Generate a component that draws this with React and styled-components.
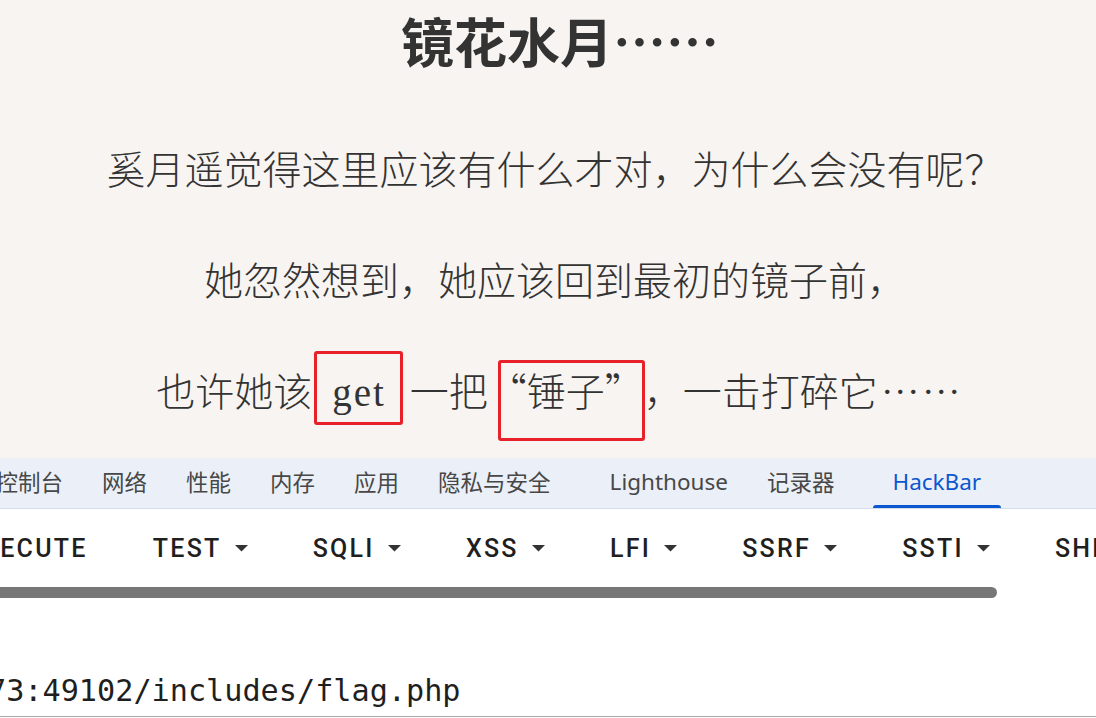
import React from "react";
import styled, { createGlobalStyle, css } from "styled-components";

const GlobalStyle = createGlobalStyle`
  html, body {
    margin: 0;
    padding: 0;
    background: #fff;
  }
  body {
    width: 1096px;
    height: 718px;
    overflow: hidden;
  }
`;

const tabs = [
  { label: "控制台" },
  { label: "网络" },
  { label: "性能" },
  { label: "内存" },
  { label: "应用" },
  { label: "隐私与安全" },
  { label: "Lighthouse", gap: 20 },
  { label: "记录器" },
  { label: "HackBar", gap: 19, active: true },
];

const tools = [
  { label: "Execute" },
  { label: "Test", menu: true },
  { label: "SQLi", menu: true },
  { label: "XSS", menu: true },
  { label: "LFI", menu: true },
  { label: "SSRF", menu: true },
  { label: "SSTI", menu: true },
  { label: "Shell", menu: true },
];

const Caret = () => (
  <svg width="13" height="7" viewBox="0 0 13 7" aria-hidden="true">
    <polygon points="0,0 13,0 6.5,6.5" fill="#333" />
  </svg>
);

const App = () => {
  return (
    <Page>
      <GlobalStyle />
      <Story>
        <Title>镜花水月……</Title>
        <Para>奚月遥觉得这里应该有什么才对，为什么会没有呢？</Para>
        <Para>她忽然想到，她应该回到最初的镜子前，</Para>
        <Para $shift={9}>
          也许她该
          <Marked $top={-10} $bottom={-8} $left={2} $right={7}>
            <Latin>get</Latin>
          </Marked>
          一把
          <Marked $top={-1} $bottom={-24} $left={10} $right={-1}>
            <Quote>“</Quote>锤子<Quote>”</Quote>
          </Marked>
          ，一击打碎它<Dots>……</Dots>
        </Para>
      </Story>

      <Devtools>
        <TabBar>
          <TabTrack>
            {tabs.map((tab) => (
              <Tab key={tab.label} $gap={tab.gap} $active={tab.active}>
                {tab.label}
              </Tab>
            ))}
          </TabTrack>
        </TabBar>

        <Toolbar>
          <ButtonRow>
            {tools.map((tool) => (
              <ToolButton key={tool.label}>
                {tool.label}
                {tool.menu && <Caret />}
              </ToolButton>
            ))}
          </ButtonRow>
        </Toolbar>
        <ScrollTrack>
          <ScrollThumb />
        </ScrollTrack>

        <UrlPane>
          <UrlField>
            <UrlText>73:49102/includes/flag.php</UrlText>
          </UrlField>
        </UrlPane>
      </Devtools>
    </Page>
  );
};

const Page = styled.div`
  display: flex;
  flex-direction: column;
  width: 1096px;
  height: 718px;
  overflow: hidden;
`;

const Story = styled.section`
  flex-shrink: 0;
  box-sizing: border-box;
  height: 458px;
  padding-left: 14px;
  display: flex;
  flex-direction: column;
  align-items: center;
  background: #f8f4f1;
  color: #333;
  font-family: "Noto Sans CJK SC", "Liberation Serif", serif;
  font-weight: 300;
  font-feature-settings: "fwid";
`;

const Title = styled.h1`
  margin: 0 0 59px 10px;
  font-size: 53px;
  line-height: 80px;
  font-weight: 700;
`;

const Para = styled.p`
  margin: 0 0 55px;
  padding-left: ${({ $shift }) => $shift || 0}px;
  font-size: 39px;
  line-height: 56px;
  white-space: nowrap;
  &:last-child {
    margin-bottom: 0;
  }
`;

const Marked = styled.span`
  position: relative;
  &::after {
    content: "";
    position: absolute;
    top: ${({ $top }) => $top}px;
    bottom: ${({ $bottom }) => $bottom}px;
    left: ${({ $left }) => $left}px;
    right: ${({ $right }) => $right}px;
    border: 3px solid #e8202a;
    border-radius: 3px;
    pointer-events: none;
  }
`;

const Quote = styled.span`
  display: inline-block;
  width: 1em;
  text-align: center;
`;

const Dots = styled.span`
  letter-spacing: 2px;
  margin-left: 3px;
`;

const Latin = styled.span`
  font-family: "Liberation Serif", serif;
  font-weight: 400;
  letter-spacing: 2px;
  padding: 0 24px 0 20px;
`;

const Devtools = styled.section`
  flex: 1;
  display: flex;
  flex-direction: column;
  background: #fff;
  overflow: hidden;
`;

const TabBar = styled.nav`
  flex-shrink: 0;
  height: 50px;
  display: flex;
  background: #ebf0f8;
  border-bottom: 1px solid #d3dce8;
  overflow: hidden;
`;

const TabTrack = styled.div`
  display: flex;
  height: 100%;
  margin-left: -24px;
`;

const Tab = styled.div`
  position: relative;
  box-sizing: border-box;
  display: flex;
  align-items: center;
  padding: 0 19.5px 3px;
  margin-left: ${({ $gap }) => $gap || 0}px;
  font-family: "Noto Sans", "Noto Sans CJK SC", sans-serif;
  font-size: 22.5px;
  color: ${({ $active }) => ($active ? "#0b57d0" : "#474747")};
  white-space: nowrap;
  ${({ $active }) =>
    $active &&
    css`
      &::after {
        content: "";
        position: absolute;
        left: 0;
        right: 0;
        bottom: 0;
        height: 3px;
        background: #0b57d0;
        border-radius: 3px 3px 0 0;
      }
    `}
`;

const Toolbar = styled.div`
  flex-shrink: 0;
  height: 78px;
  display: flex;
  align-items: center;
  overflow: hidden;
`;

const ButtonRow = styled.div`
  display: flex;
  margin-left: -66.8px;
`;

const ToolButton = styled.button`
  flex-shrink: 0;
  display: inline-flex;
  align-items: center;
  gap: 13px;
  height: 72px;
  padding: 0 32.6px;
  border: 0;
  background: transparent;
  font-family: Roboto, "Noto Sans", sans-serif;
  font-weight: 500;
  font-size: 25px;
  letter-spacing: 2.25px;
  text-transform: uppercase;
  color: #1f1f1f;
  white-space: nowrap;
`;

const ScrollTrack = styled.div`
  flex-shrink: 0;
  height: 11px;
  overflow: hidden;
`;

const ScrollThumb = styled.div`
  width: 1003px;
  height: 100%;
  margin-left: -6px;
  background: #777;
  border-radius: 6px;
`;

const UrlPane = styled.div`
  flex: 1;
  display: flex;
  flex-direction: column;
  justify-content: flex-end;
  padding-bottom: 1px;
`;

const UrlField = styled.div`
  padding-bottom: 5px;
  border-bottom: 1px solid #a8a8a8;
  overflow: hidden;
`;

const UrlText = styled.div`
  margin-left: -12px;
  font-family: "DejaVu Sans Mono", "Liberation Mono", monospace;
  font-size: 30.2px;
  line-height: 40px;
  color: #1f1f1f;
  white-space: nowrap;
`;

export default App;
